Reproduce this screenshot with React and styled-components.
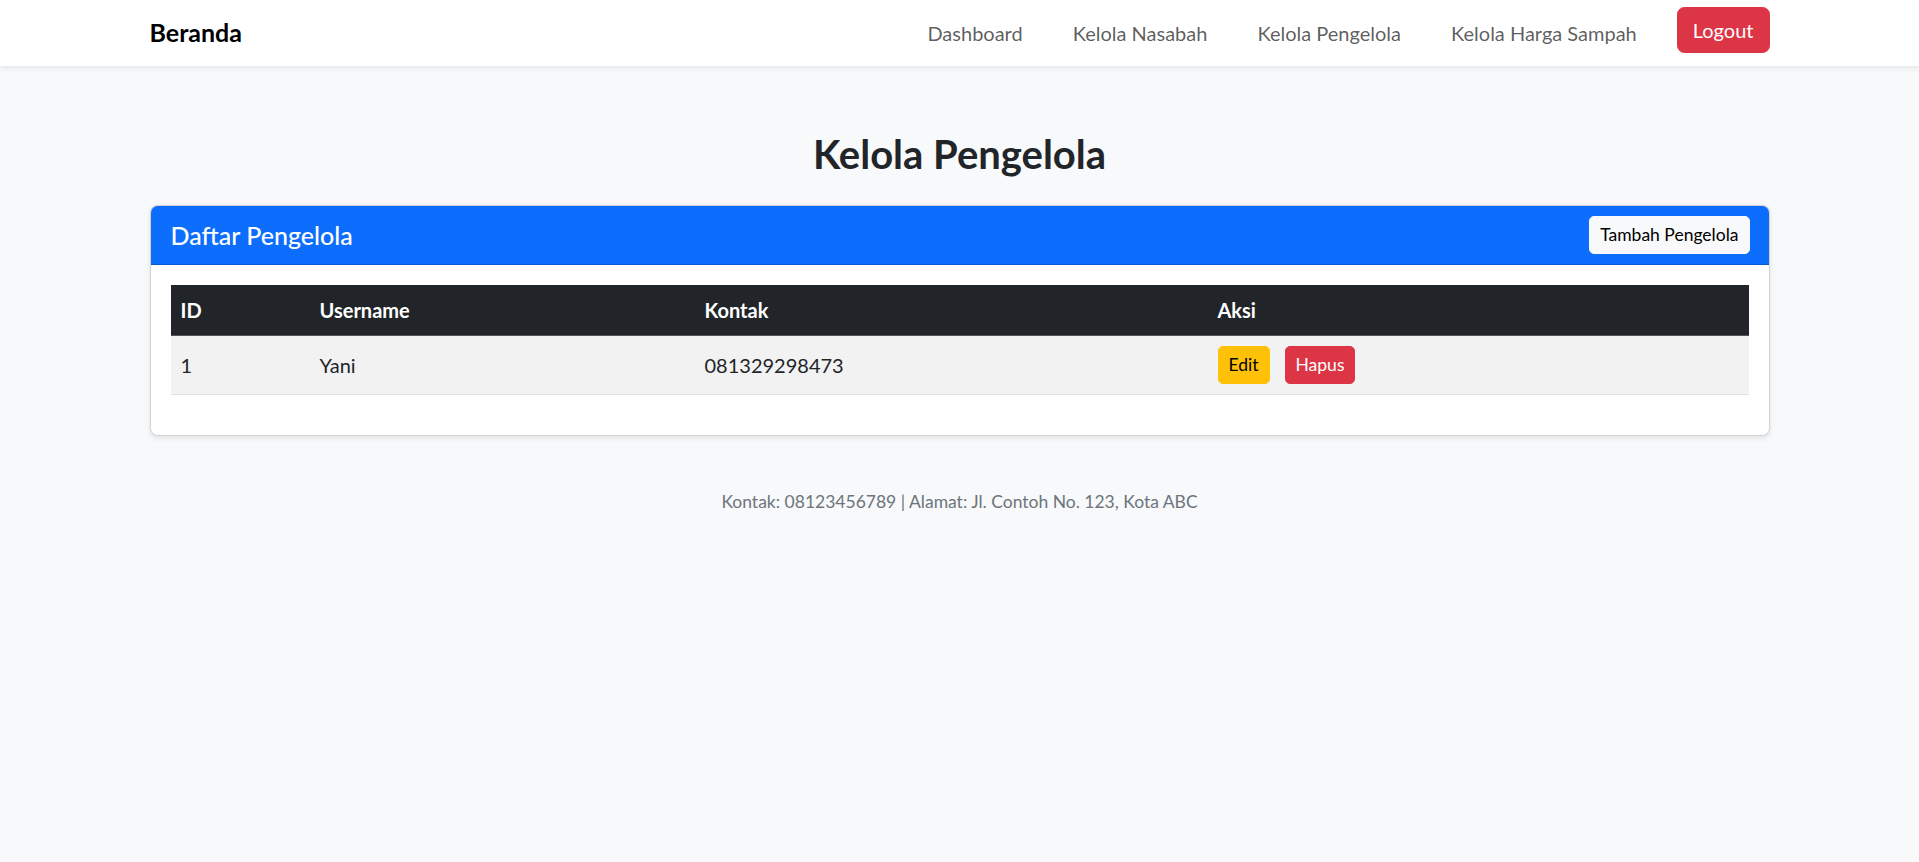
import React from 'react';
import styled, { createGlobalStyle } from 'styled-components';

const GlobalStyle = createGlobalStyle`
  * {
    box-sizing: border-box;
  }
  body {
    margin: 0;
    background: #f8f9fa;
    color: #212529;
    font-family: Lato, 'Liberation Sans', Arial, sans-serif;
    font-size: 20px;
    line-height: 1.5;
  }
`;

const Navbar = styled.header`
  background: #fff;
  box-shadow: 0 2.5px 5px rgba(0, 0, 0, 0.075);
`;

const NavInner = styled.div`
  width: 1620px;
  height: 66px;
  margin: 0 auto;
  display: flex;
  align-items: center;
  justify-content: space-between;
`;

const Brand = styled.a`
  font-size: 25px;
  font-weight: 700;
  color: #000;
  text-decoration: none;
`;

const NavList = styled.nav`
  display: flex;
  align-items: center;
`;

const NavLink = styled.a`
  font-size: 20px;
  color: rgba(0, 0, 0, 0.65);
  text-decoration: none;
  padding: 0 25px;
`;

const LogoutButton = styled.button`
  margin: 0 0 6px 15px;
  font-family: inherit;
  font-size: 20px;
  line-height: 30px;
  padding: 7px 15px;
  color: #fff;
  background: #dc3545;
  border: 1px solid #dc3545;
  border-radius: 7.5px;
`;

const Container = styled.main`
  width: 1620px;
  margin: 0 auto;
`;

const PageTitle = styled.h2`
  margin: 64px 0 27px;
  text-align: center;
  font-size: 40px;
  font-weight: 700;
  line-height: 48px;
`;

const Card = styled.section`
  background: #fff;
  border: 1px solid rgba(0, 0, 0, 0.175);
  border-radius: 7.5px;
  box-shadow: 0 2.5px 5px rgba(0, 0, 0, 0.075);
  overflow: hidden;
`;

const CardHeader = styled.div`
  display: flex;
  align-items: center;
  justify-content: space-between;
  padding: 10px 19px 10px 20px;
  background: #0d6efd;
  color: #fff;
  border-bottom: 1px solid rgba(0, 0, 0, 0.175);
`;

const CardTitle = styled.h5`
  margin: 0;
  font-size: 25px;
  font-weight: 500;
  line-height: 1.2;
`;

const SmallButton = styled.button`
  font-family: inherit;
  font-size: 17.5px;
  line-height: 26px;
  padding: 5px 10px;
  border-radius: 5px;
  border: 1px solid ${(p) => p.$bg};
  background: ${(p) => p.$bg};
  color: ${(p) => p.$fg};
`;

const CardBody = styled.div`
  padding: 20px;
`;

const Table = styled.table`
  width: 100%;
  border-collapse: collapse;
  table-layout: fixed;
  margin-bottom: 20px;
`;

const Th = styled.th`
  width: ${(p) => p.$w || 'auto'};
  padding: 10px;
  text-align: left;
  font-weight: 700;
  line-height: 30px;
  color: #fff;
  background: #212529;
  border-bottom: 1px solid #50555a;
`;

const Td = styled.td`
  padding: 10px;
  line-height: 30px;
  vertical-align: middle;
  background: #f2f2f2;
  border-bottom: 1px solid #dee2e6;
`;

const Actions = styled.div`
  display: flex;
  gap: 15px;
`;

const Footer = styled.footer`
  padding-top: 53px;
  text-align: center;
  font-size: 17.5px;
  line-height: 26px;
  color: #6c757d;
`;

const rows = [{ id: 1, username: 'Yani', kontak: '081329298473' }];

export default function App() {
  return (
    <>
      <GlobalStyle />
      <Navbar>
        <NavInner>
          <Brand href="#">Beranda</Brand>
          <NavList>
            <NavLink href="#">Dashboard</NavLink>
            <NavLink href="#">Kelola Nasabah</NavLink>
            <NavLink href="#">Kelola Pengelola</NavLink>
            <NavLink href="#">Kelola Harga Sampah</NavLink>
            <LogoutButton>Logout</LogoutButton>
          </NavList>
        </NavInner>
      </Navbar>
      <Container>
        <PageTitle>Kelola Pengelola</PageTitle>
        <Card>
          <CardHeader>
            <CardTitle>Daftar Pengelola</CardTitle>
            <SmallButton $bg="#f8f9fa" $fg="#000">Tambah Pengelola</SmallButton>
          </CardHeader>
          <CardBody>
            <Table>
              <thead>
                <tr>
                  <Th $w="139px">ID</Th>
                  <Th $w="385px">Username</Th>
                  <Th $w="513px">Kontak</Th>
                  <Th>Aksi</Th>
                </tr>
              </thead>
              <tbody>
                {rows.map((r) => (
                  <tr key={r.id}>
                    <Td>{r.id}</Td>
                    <Td>{r.username}</Td>
                    <Td>{r.kontak}</Td>
                    <Td>
                      <Actions>
                        <SmallButton $bg="#ffc107" $fg="#000">Edit</SmallButton>
                        <SmallButton $bg="#dc3545" $fg="#fff">Hapus</SmallButton>
                      </Actions>
                    </Td>
                  </tr>
                ))}
              </tbody>
            </Table>
          </CardBody>
        </Card>
        <Footer>Kontak: 08123456789 | Alamat: Jl. Contoh No. 123, Kota ABC</Footer>
      </Container>
    </>
  );
}
